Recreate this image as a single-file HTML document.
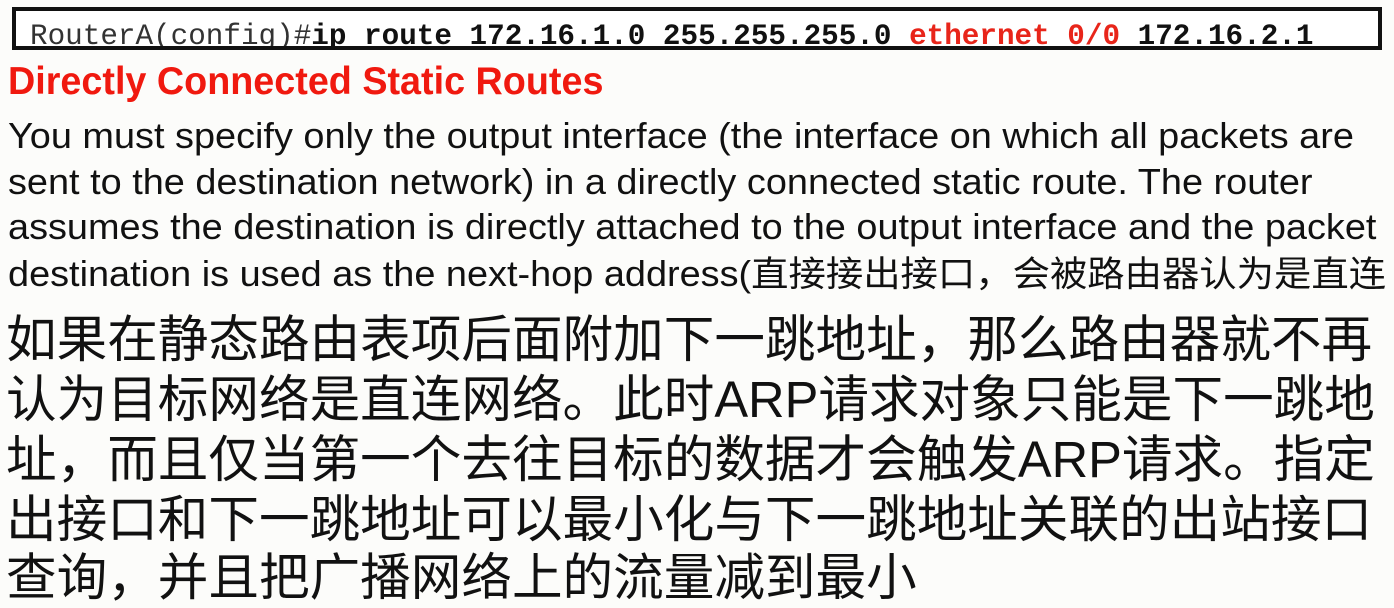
<!DOCTYPE html>
<html><head><meta charset="utf-8"><style>
html,body{margin:0;padding:0;}
body{width:1394px;height:604px;overflow:hidden;background:#fcfcfa;position:relative;font-family:"Liberation Sans","Noto Sans CJK SC",sans-serif;color:#111;}
.box{position:absolute;left:12px;top:7px;width:1362px;height:35px;border:4px solid #111;background:#fff;overflow:hidden;}
.box div{position:absolute;left:14px;top:8px;font-family:"Liberation Mono",monospace;font-size:29.3px;line-height:36px;white-space:nowrap;color:#333;}
.box b{color:#111}
.box .r{color:#e8251a}
.h{position:absolute;left:8px;top:60px;font-size:38.5px;font-weight:bold;color:#f0190f;white-space:nowrap;transform:scaleX(0.98);transform-origin:0 0;line-height:44px;}
.l{position:absolute;left:8px;font-size:36px;white-space:nowrap;line-height:40px;transform:scaleX(1.052);transform-origin:0 0;}
.l .c{font-size:35.5px;font-family:"Noto Sans CJK SC",sans-serif;}
.z{position:absolute;left:6px;font-size:50.6px;white-space:nowrap;line-height:60px;font-family:"Liberation Sans","Noto Sans CJK SC",sans-serif;}
</style></head><body>
<div class="box"><div>RouterA(config)#<b>ip route 172.16.1.0 255.255.255.0 </b><b class="r">ethernet 0/0</b><b> 172.16.2.1</b></div></div>
<div class="h">Directly Connected Static Routes</div>
<div class="l" style="top:116px">You must specify only the output interface (the interface on which all packets are</div>
<div class="l" style="top:162px">sent to the destination network) in a directly connected static route. The router</div>
<div class="l" style="top:207px">assumes the destination is directly attached to the output interface and the packet</div>
<div class="l" style="top:252px">destination is used as the next-hop address(<span class="c">直接接出接口，会被路由器认为是直连</span></div>
<div class="z" style="top:310px">如果在静态路由表项后面附加下一跳地址，那么路由器就不再</div>
<div class="z" style="top:370px">认为目标网络是直连网络。此时ARP请求对象只能是下一跳地</div>
<div class="z" style="top:430px">址，而且仅当第一个去往目标的数据才会触发ARP请求。指定</div>
<div class="z" style="top:490px">出接口和下一跳地址可以最小化与下一跳地址关联的出站接口</div>
<div class="z" style="top:548px">查询，并且把广播网络上的流量减到最小</div>
</body></html>
